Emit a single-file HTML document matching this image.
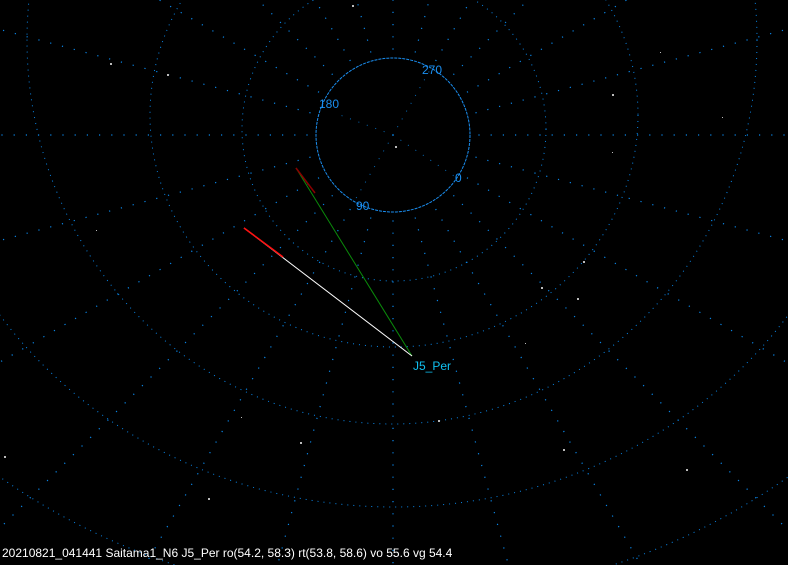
<!DOCTYPE html>
<html><head><meta charset="utf-8"><style>
html,body{margin:0;padding:0;background:#000;width:788px;height:565px;overflow:hidden}
svg{display:block;overflow:hidden;position:absolute;left:0;top:0}
text{font-family:"Liberation Sans","DejaVu Sans",sans-serif;font-size:12px}
</style></head><body>
<svg width="788" height="565" viewBox="0 0 788 565">
<g fill="none" stroke="#0a86e8" stroke-width="1" stroke-dasharray="1 5">
<circle cx="394" cy="129" r="152"/>
<ellipse cx="394" cy="115" rx="244" ry="232"/>
<ellipse cx="392" cy="40" rx="365" ry="384"/>
<ellipse cx="394" cy="60" rx="480" ry="447"/>
<ellipse cx="394" cy="20" rx="640" ry="580"/>
</g>
<g stroke="#0a86e8" stroke-width="1.2" stroke-dasharray="1.2 11">
<line x1="393" y1="135" x2="1180" y2="135"/>
<line x1="393" y1="135" x2="1153" y2="339"/>
<line x1="393" y1="135" x2="1075" y2="529"/>
<line x1="393" y1="135" x2="950" y2="692"/>
<line x1="393" y1="135" x2="786" y2="817"/>
<line x1="393" y1="135" x2="597" y2="895"/>
<line x1="393" y1="135" x2="393" y2="922"/>
<line x1="393" y1="135" x2="189" y2="895"/>
<line x1="393" y1="135" x2="0" y2="817"/>
<line x1="393" y1="135" x2="-164" y2="692"/>
<line x1="393" y1="135" x2="-289" y2="529"/>
<line x1="393" y1="135" x2="-367" y2="339"/>
<line x1="393" y1="135" x2="-394" y2="135"/>
<line x1="393" y1="135" x2="-367" y2="-69"/>
<line x1="393" y1="135" x2="-289" y2="-259"/>
<line x1="393" y1="135" x2="-164" y2="-422"/>
<line x1="393" y1="135" x2="0" y2="-547"/>
<line x1="393" y1="135" x2="189" y2="-625"/>
<line x1="393" y1="135" x2="393" y2="-652"/>
<line x1="393" y1="135" x2="597" y2="-625"/>
<line x1="393" y1="135" x2="786" y2="-547"/>
<line x1="393" y1="135" x2="950" y2="-422"/>
<line x1="393" y1="135" x2="1075" y2="-259"/>
<line x1="393" y1="135" x2="1153" y2="-69"/>
</g>
<circle cx="393" cy="135" r="77" fill="#000"/>
<g stroke="#0a86e8" stroke-width="1" stroke-dasharray="1 8" opacity="0.8">
<line x1="393" y1="135" x2="340" y2="115"/>
<line x1="393" y1="135" x2="460" y2="180"/>
<line x1="393" y1="135" x2="430" y2="70"/>
<line x1="393" y1="135" x2="355" y2="200"/>
</g>
<circle cx="393" cy="135" r="77" fill="none" stroke="#1a8ef0" stroke-width="1" stroke-dasharray="3 1"/>
<g fill="#bbb">
<rect x="110" y="63" width="2" height="2"/><rect x="167" y="74" width="2" height="2"/>
<rect x="612" y="94" width="2" height="2"/><rect x="583" y="261" width="2" height="2"/>
<rect x="577" y="298" width="2" height="2"/><rect x="300" y="442" width="2" height="2"/>
<rect x="4" y="456" width="2" height="2"/><rect x="208" y="498" width="2" height="2"/>
<rect x="563" y="449" width="2" height="2"/><rect x="438" y="420" width="2" height="2"/>
<rect x="541" y="287" width="2" height="2"/><rect x="395" y="146" width="2" height="2"/>
<rect x="352" y="5" width="2" height="2"/><rect x="612" y="152" width="1" height="1"/>
<rect x="686" y="469" width="2" height="2"/><rect x="96" y="230" width="1" height="1"/>
<rect x="241" y="417" width="1" height="1"/><rect x="722" y="117" width="1" height="1"/>
<rect x="525" y="343" width="1" height="1"/><rect x="660" y="52" width="1" height="1"/>
</g>
<line x1="296" y1="168" x2="412" y2="356" stroke="#0a8a0a" stroke-width="1"/>
<line x1="296" y1="168" x2="315" y2="193" stroke="#8a0000" stroke-width="1.5"/>
<line x1="244" y1="228" x2="412" y2="356" stroke="#fff" stroke-width="1"/>
<line x1="244" y1="228" x2="283" y2="257" stroke="#ff1010" stroke-width="1.6"/>
<g fill="#1a8ef0">
<text x="422" y="74">270</text>
<text x="319" y="108">180</text>
<text x="455" y="182">0</text>
<text x="356" y="210">90</text>
</g>
<text x="413" y="370" fill="#10c0f0">J5_Per</text>
<text x="2" y="557" fill="#fff">20210821_041441 Saitama1_N6 J5_Per ro(54.2, 58.3) rt(53.8, 58.6) vo 55.6 vg 54.4</text>
</svg>
</body></html>
